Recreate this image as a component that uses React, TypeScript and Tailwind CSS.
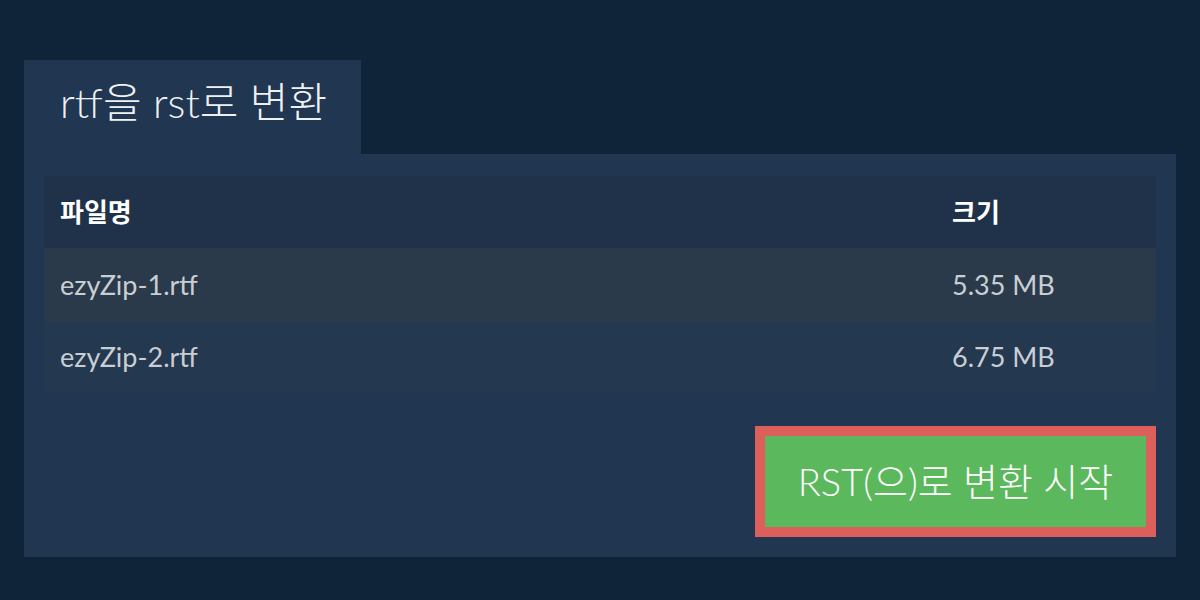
export default function App() {
  const files = [
    { name: "ezyZip-1.rtf", size: "5.35 MB" },
    { name: "ezyZip-2.rtf", size: "6.75 MB" },
  ]
  return (
    <div className="w-[1200px] h-[600px] bg-[#0f2339] px-6 pt-[60px] font-['Lato','Noto_Sans_CJK_KR',sans-serif]">
      <div className="flex">
        <div className="w-[337px] h-[94px] bg-[#213650] pl-9 pt-[16px] text-[42px] font-light text-[#eef1f4] leading-[52px]">
          rtf을 rst로 변환
        </div>
      </div>
      <div className="bg-[#213650] px-5 pt-[22px] pb-5">
        <div className="text-[#c9ced4]">
          <div className="grid grid-cols-[892px_1fr] h-[72px] items-center bg-[#1f3249] px-4 text-[26px] font-bold text-white">
            <div>파일명</div>
            <div>크기</div>
          </div>
          {files.map((f, i) => (
            <div
              key={f.name}
              className={
                i === 0
                  ? "grid grid-cols-[892px_1fr] h-[74px] items-center bg-[#2b3a4a] px-4 text-[27px]"
                  : "grid grid-cols-[892px_1fr] h-[71px] items-center bg-[#243850] px-4 text-[27px]"
              }
            >
              <div>{f.name}</div>
              <div>{f.size}</div>
            </div>
          ))}
        </div>
        <div className="flex justify-end mt-[33px]">
          <button className="w-[401px] h-[111px] border-[10px] border-[#dc5f5c] bg-[#5cb85c] text-white text-[38px] font-light">
            RST(으)로 변환 시작
          </button>
        </div>
      </div>
    </div>
  )
}
